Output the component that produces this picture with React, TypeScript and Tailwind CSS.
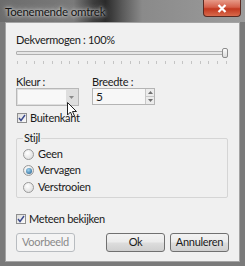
import React from "react";

const font = { fontFamily: 'Lato, "Noto Sans", Arial, sans-serif' };

function Check() {
  return (
    <div className="w-[10px] h-[10px] border border-[#8f8f8f] bg-[linear-gradient(135deg,#dcdcdc,#fbfbfb)] flex items-center justify-center">
      <svg width="8" height="8" viewBox="0 0 8 8">
        <path d="M1 4 L3 6.5 L7 1" fill="none" stroke="#3b4a8c" strokeWidth="1.4" />
      </svg>
    </div>
  );
}

function Radio({ on }: { on?: boolean }) {
  return (
    <div className="w-[11px] h-[11px] rounded-full border border-[#9a9a9a] bg-[radial-gradient(circle_at_40%_35%,#ffffff,#d6d6d6)] flex items-center justify-center">
      {on && (
        <div className="w-[6px] h-[6px] rounded-full bg-[radial-gradient(circle_at_40%_35%,#9fd3f0,#1c5a8a)]" />
      )}
    </div>
  );
}

export default function App() {
  const ticks = Array.from({ length: 25 });
  return (
    <div
      className="w-[245px] h-[266px] bg-[#7a7a7a] flex flex-col text-[11px] tracking-[-0.3px] text-[#1a1a1a] overflow-hidden"
      style={font}
    >
      {/* Title bar */}
      <div className="h-[22px] flex items-start justify-between bg-[linear-gradient(90deg,#6c6c6c_0%,#7a7a7a_30%,#3e3e3e_38%,#2a2a2a_43%,#5a5a5a_50%,#8a8a8a_58%,#9c9c9c_100%)]">
        <div className="pl-[5px] pt-[4px] text-[11.5px] tracking-[-0.2px] text-[#141414] [text-shadow:0_0_6px_#d8d8d8,0_0_3px_#e0e0e0] leading-[16px]">
          Toenemende omtrek
        </div>
        <div className="mr-[4px] w-[38px] h-[17px] rounded-b-[4px] border border-t-0 border-[#5a2a22] bg-[linear-gradient(180deg,#e79a88_0%,#d5604a_45%,#c2381f_55%,#d86a4c_100%)] flex items-center justify-center">
          <svg width="10" height="9" viewBox="0 0 10 9">
            <path d="M1.5 1 L8.5 8 M8.5 1 L1.5 8" stroke="#ffffff" strokeWidth="2.2" />
          </svg>
        </div>
      </div>

      {/* Client */}
      <div className="mx-[5px] mb-[4px] flex-1 bg-[#f0f0f0] border border-[#a4a4a4] flex flex-col px-[10px] pt-[10px] relative">
        <div className="leading-[14px]">Dekvermogen : 100%</div>

        {/* slider */}
        <div className="h-[12px] flex items-center w-[212px]">
          <div className="flex-1 h-[4px] border border-[#b0b0b0] bg-[#e6e6e6] rounded-[1px]" />
          <div className="w-[6px] h-[10px] border border-[#8c8c8c] rounded-[2px] bg-[linear-gradient(180deg,#fbfbfb,#dcdcdc)] -ml-[5px]" />
        </div>
        <div className="mt-[2px] h-[4px] w-[212px] flex justify-between px-[1px]">
          {ticks.map((_, i) => (
            <div key={i} className="w-[1px] h-[3px] bg-[#c4c4c4]" />
          ))}
        </div>

        {/* Kleur / Breedte */}
        <div className="mt-[10px] flex gap-[13px]">
          <div className="flex flex-col">
            <div className="leading-[13px]">Kleur :</div>
            <div className="w-[63px] h-[18px] border border-[#b8b8b8] bg-[#dedede] flex p-[1px]">
              <div className="w-[48px] bg-[#f8f8f8]" />
              <div className="flex-1 flex items-center justify-center">
                <svg width="5" height="3" viewBox="0 0 5 3">
                  <path d="M0 0 H5 L2.5 3 Z" fill="#8a8a8a" />
                </svg>
              </div>
            </div>
          </div>
          <div className="flex flex-col">
            <div className="leading-[13px]">Breedte :</div>
            <div className="w-[63px] h-[17px] border border-[#b4b4b4] bg-[#f7f7f7] flex">
              <div className="flex-1 pl-[3px] leading-[15px] text-[12px]">5</div>
              <div className="w-[9px] flex flex-col">
                <div className="flex-1 border-l border-b border-[#c8c8c8] bg-[#ececec] flex items-center justify-center">
                  <svg width="5" height="3" viewBox="0 0 5 3"><path d="M0 3 H5 L2.5 0 Z" fill="#707070" /></svg>
                </div>
                <div className="flex-1 border-l border-[#c8c8c8] bg-[#ececec] flex items-center justify-center">
                  <svg width="5" height="3" viewBox="0 0 5 3"><path d="M0 0 H5 L2.5 3 Z" fill="#707070" /></svg>
                </div>
              </div>
            </div>
          </div>
        </div>

        {/* Buitenkant */}
        <div className="mt-[5px] h-[14px] flex items-center gap-[3px] pl-[1px]">
          <Check />
          <span>Buitenkant</span>
        </div>

        {/* Stijl group */}
        <div className="mt-[13px] w-[212px] relative">
          <div className="absolute left-[7px] -top-[6px] bg-[#f0f0f0] px-[1px] leading-[12px]">Stijl</div>
          <div className="border border-[#d5d5d5] rounded-[2px] h-[60px] flex flex-col pt-[9px] pl-[6px] gap-[4.5px]">
            <div className="flex items-center gap-[4px] h-[12px]">
              <Radio />
              <span>Geen</span>
            </div>
            <div className="flex items-center gap-[4px] h-[12px]">
              <Radio on />
              <span>Vervagen</span>
            </div>
            <div className="flex items-center gap-[4px] h-[12px]">
              <Radio />
              <span>Verstrooien</span>
            </div>
          </div>
        </div>

        {/* Meteen bekijken */}
        <div className="mt-[14px] h-[14px] flex items-center gap-[3px]">
          <Check />
          <span>Meteen bekijken</span>
        </div>

        {/* Buttons */}
        <div className="mt-[7px] flex w-[213px]">
          <div className="w-[59px] h-[19px] rounded-[3px] border border-[#b8bcc0] bg-[#f4f4f4] text-[#8a8a8a] flex items-center justify-center">
            Voorbeeld
          </div>
          <div className="ml-auto w-[59px] h-[19px] rounded-[3px] border border-[#707070] bg-[linear-gradient(180deg,#f2f2f2_0%,#ebebeb_48%,#dddddd_52%,#cfcfcf_100%)] flex items-center justify-center">
            Ok
          </div>
          <div className="ml-[5px] w-[59px] h-[19px] rounded-[3px] border border-[#707070] bg-[linear-gradient(180deg,#f2f2f2_0%,#ebebeb_48%,#dddddd_52%,#cfcfcf_100%)] flex items-center justify-center">
            Annuleren
          </div>
        </div>

        {/* mouse cursor overlay */}
        <svg className="absolute left-[61px] top-[79px]" width="11" height="17" viewBox="0 0 11 17">
          <path d="M0.5 0.5 L0.5 13 L3.5 10 L5.5 15 L7.5 14 L5.5 9.5 L9.5 9.5 Z" fill="#ffffff" stroke="#222222" strokeWidth="1" />
        </svg>
      </div>
    </div>
  );
}
